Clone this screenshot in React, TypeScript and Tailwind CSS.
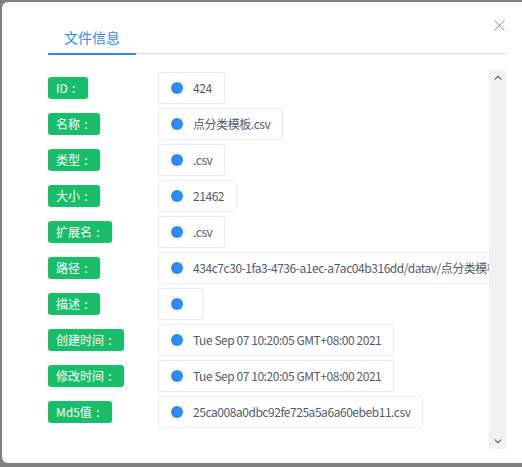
import { X } from 'lucide-react'

const ROWS = [
  { label: 'ID', value: '424' },
  { label: '名称', value: '点分类模板.csv' },
  { label: '类型', value: '.csv' },
  { label: '大小', value: '21462' },
  { label: '扩展名', value: '.csv' },
  { label: '路径', value: '434c7c30-1fa3-4736-a1ec-a7ac04b316dd/datav/点分类模板.csv' },
  { label: '描述', value: '' },
  { label: '创建时间', value: 'Tue Sep 07 10:20:05 GMT+08:00 2021' },
  { label: '修改时间', value: 'Tue Sep 07 10:20:05 GMT+08:00 2021' },
  { label: 'Md5值', value: '25ca008a0dbc92fe725a5a6a60ebeb11.csv' },
]

function DotTag({ text }: { text: string }) {
  return (
    <div className="flex h-[32px] shrink-0 items-center whitespace-nowrap rounded-[3px] border border-[#e8eaec] bg-white px-3 text-[12px] text-[#515a6e]">
      <span className="size-[12px] shrink-0 rounded-full bg-[#2d8cf0]" />
      {text ? <span className="ml-[10px] tracking-[-0.45px]">{text}</span> : <span className="w-[8px]" />}
    </div>
  )
}

function ScrollTrack() {
  return (
    <div className="flex w-[17px] shrink-0 flex-col items-center justify-between bg-[#f1f1f1] py-[5px]">
      <svg width="8" height="5" viewBox="0 0 8 5" className="text-[#505050]">
        <path d="M0 4.5 L4 0.5 L8 4.5 L6.6 4.5 L4 2 L1.4 4.5 Z" fill="currentColor" />
      </svg>
      <svg width="8" height="5" viewBox="0 0 8 5" className="text-[#505050]">
        <path d="M0 0.5 L4 4.5 L8 0.5 L6.6 0.5 L4 3 L1.4 0.5 Z" fill="currentColor" />
      </svg>
    </div>
  )
}

export default function App() {
  return (
    <div className="h-[467px] w-[522px] overflow-hidden bg-[#808080] pl-[2px] pt-[2px] font-['Noto_Sans_CJK_SC',sans-serif]">
      <div className="relative h-[461px] w-[530px] rounded-[6px] bg-white pl-[46px] pr-[26px] pt-[16px]">
        <button className="absolute left-[488px] top-[14px] text-[#999]">
          <X className="size-[19px]" strokeWidth={1.3} />
        </button>

        <div className="flex h-[36px] w-[458px] border-b border-[#dcdee2]">
          <div className="relative flex h-[36px] items-center px-4 pt-[2px] text-[14px] text-[#2d8cf0]">
            文件信息
            <span className="absolute bottom-[-1px] left-0 right-0 h-[2px] bg-[#2d8cf0]" />
          </div>
        </div>

        <div className="mt-[16px] flex h-[379px] w-[458px]">
          <div className="flex min-w-0 flex-1 flex-col gap-[4px] overflow-hidden pt-[2px]">
            {ROWS.map((r) => (
              <div key={r.label} className="flex h-[32px] shrink-0">
                <div className="w-[110px] shrink-0 pt-[2px]">
                  <span className="inline-flex h-[22px] items-center rounded-[3px] bg-[#19be6b] pl-2 pr-2 text-[12px] text-white">
                    {r.label}
                    <span className="inline-block w-[12px] text-center">:</span>
                  </span>
                </div>
                <DotTag text={r.value} />
              </div>
            ))}
          </div>
          <ScrollTrack />
        </div>
      </div>
    </div>
  )
}
